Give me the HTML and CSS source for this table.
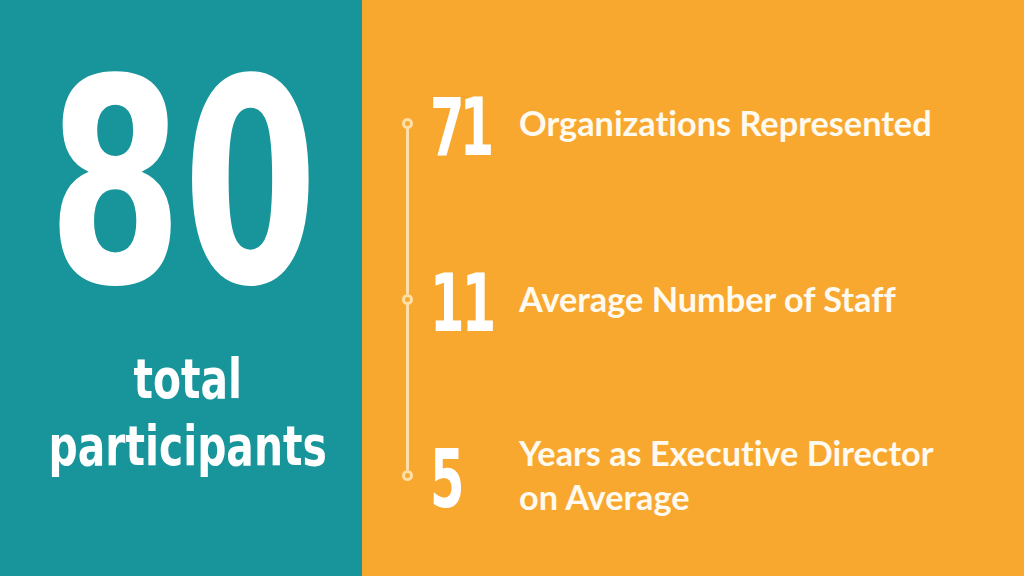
FILE: index.html
```html
<!DOCTYPE html>
<html lang="en">
<head>
<meta charset="utf-8">
<title>Participants</title>
<link rel="stylesheet" href="styles.css">
</head>
<body>
<main class="slide">
  <section class="total">
    <div class="total-num"><span class="squeeze">80</span></div>
    <div class="total-label"><span class="squeeze squeeze-label">total<br>participants</span></div>
  </section>
  <section class="stats">
    <div class="row row-first">
      <div class="marker"><span class="seg"></span><span class="dot"></span><span class="seg"></span></div>
      <div class="num"><span class="num-text num-71">71</span></div>
      <div class="label">Organizations Represented</div>
    </div>
    <div class="row">
      <div class="marker"><span class="seg"></span><span class="dot"></span><span class="seg"></span></div>
      <div class="num"><span class="num-text num-11">11</span></div>
      <div class="label">Average Number of Staff</div>
    </div>
    <div class="row row-last">
      <div class="marker"><span class="seg"></span><span class="dot"></span><span class="seg"></span></div>
      <div class="num"><span class="num-text">5</span></div>
      <div class="label">Years as Executive Director<br>on Average</div>
    </div>
  </section>
</main>
</body>
</html>
```
FILE: styles.css
```css
html, body {
  margin: 0;
  padding: 0;
}
body {
  width: 1024px;
  height: 576px;
  overflow: hidden;
}
.slide {
  display: grid;
  grid-template-columns: 362px 1fr;
  width: 1024px;
  height: 576px;
}
.total {
  background: #18959a;
  color: #ffffff;
  display: flex;
  flex-direction: column;
  align-items: center;
  padding-top: 38px;
  font-family: "DejaVu Sans Condensed", "DejaVu Sans", sans-serif;
  font-weight: 700;
  overflow: hidden;
}
.squeeze {
  display: inline-block;
  transform: scaleX(0.76);
  transform-origin: center;
  white-space: nowrap;
}
.total-num {
  font-size: 284px;
  line-height: 292px;
  margin-left: 4px;
}
.total-label {
  margin-top: 15px;
  font-size: 56px;
  line-height: 67px;
  text-align: center;
  margin-left: 14px;
}
.squeeze-label {
  transform: scaleX(0.81);
}
.stats {
  background: #f9a82f;
  color: #ffffff;
  display: flex;
  flex-direction: column;
  padding: 35px 0 13px 38px;
}
.row {
  display: grid;
  grid-template-columns: 14px 73px 1fr;
  column-gap: 16px;
  align-items: center;
  height: 176px;
}
.marker {
  display: flex;
  flex-direction: column;
  align-items: center;
  height: 100%;
}
.seg {
  flex: 1;
  width: 3px;
  background: #fddfa8;
}
.row-first .seg:first-child,
.row-last .seg:last-child {
  background: transparent;
}
.dot {
  width: 5px;
  height: 5px;
  border: 3px solid #fddfa8;
  border-radius: 50%;
  flex: none;
}
.num {
  font-family: "DejaVu Sans Condensed", "DejaVu Sans", sans-serif;
  font-weight: 700;
  font-size: 81px;
  line-height: 82px;
  margin-top: 8px;
}
.num-text {
  display: inline-block;
  transform: scaleX(0.68);
  transform-origin: left center;
  letter-spacing: -2px;
  white-space: nowrap;
}
.num-71 {
  letter-spacing: -7px;
}
.num-11 {
  letter-spacing: -4px;
}
.label {
  font-family: Lato, "Liberation Sans", sans-serif;
  font-weight: 700;
  font-size: 34.3px;
  line-height: 44px;
  color: #fffaf0;
  font-variant-ligatures: none;
  white-space: nowrap;
}
```
